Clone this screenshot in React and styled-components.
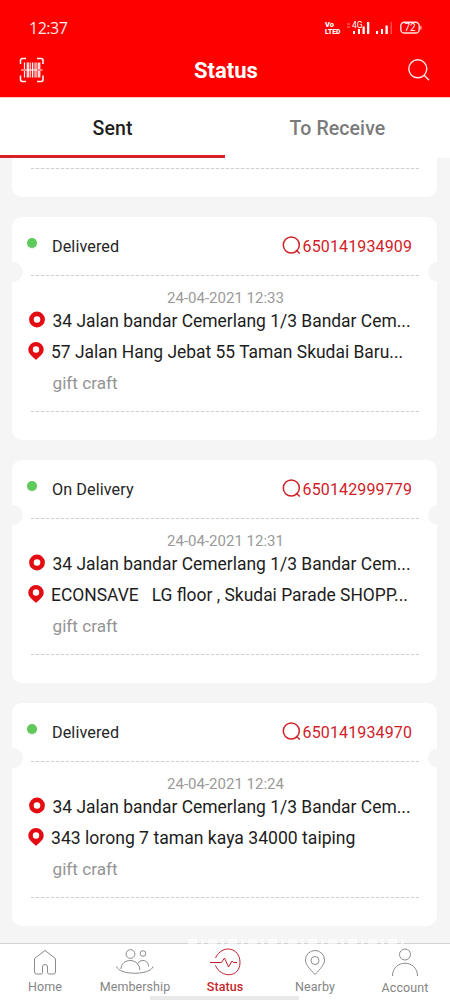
import styled, { createGlobalStyle } from "styled-components";

const GlobalStyle = createGlobalStyle`
  * {
    box-sizing: border-box;
  }
  body {
    margin: 0;
    font-family: Roboto, "Liberation Sans", sans-serif;
    background: #f5f5f5;
  }
`;
const Screen = styled.div`
  width: 450px;
  height: 1000px;
  display: flex;
  flex-direction: column;
  overflow: hidden;
  background: #f5f5f5;
`;
const Header = styled.header`
  height: 98px;
  flex: none;
  background: #fe0000;
  border-bottom: 1px solid #ffc9c9;
  color: #fff;
`;
const StatusBar = styled.div`
  height: 46px;
  padding: 9px 28px 0 29px;
  display: flex;
  align-items: center;
  justify-content: space-between;
`;
const Clock = styled.span`
  font: 400 16px "Open Sans", sans-serif;
  letter-spacing: -0.5px;
  color: #ffe9e9;
`;
const TitleBar = styled.div`
  height: 50px;
  padding: 0 19px 2px 19px;
  display: grid;
  grid-template-columns: 26px 1fr 24px;
  align-items: center;
`;
const Title = styled.h1`
  margin: 0;
  padding-top: 2px;
  text-align: center;
  font-size: 22px;
  line-height: 26px;
  font-weight: 700;
`;
const Tabs = styled.nav`
  height: 60px;
  flex: none;
  display: grid;
  grid-template-columns: 1fr 1fr;
  background: #fff;
`;
const Tab = styled.div`
  display: flex;
  align-items: center;
  justify-content: center;
  padding-top: 3px;
  font-size: 19.5px;
  font-weight: 500;
  letter-spacing: 0.1px;
  color: ${({ $active }) => ($active ? "#1f1f1f" : "#7b7b7b")};
  border-bottom: 3px solid ${({ $active }) => ($active ? "#d9202a" : "#fff")};
`;
const List = styled.main`
  height: 785px;
  flex: none;
  display: flex;
  flex-direction: column;
  gap: 20px;
  padding: 0 13px 0 12px;
  overflow: hidden;
`;
const CardEnd = styled.div`
  height: 39px;
  flex: none;
  padding: 10px 18px 0 19px;
  background: #fff;
  border-radius: 0 0 10px 10px;
`;
const Card = styled.article`
  position: relative;
  height: 223px;
  flex: none;
  padding: 0 18px 0 19px;
  background: #fff;
  border-radius: 10px;
`;
const Notch = styled.i`
  position: absolute;
  top: 45px;
  ${({ $side }) => ($side === "left" ? "left: -9px;" : "right: -11px;")}
  width: 20px;
  height: 20px;
  border-radius: 50%;
  background: #f5f5f5;
`;
const Dashes = styled.div`
  height: 1px;
  background: repeating-linear-gradient(90deg, #cfcfcf 0 3px, #f7f7f7 3px 5px);
`;
const CardHead = styled.div`
  height: 58px;
  padding: 1px 7px 0 0;
  margin-left: -4px;
  display: flex;
  align-items: center;
`;
const Dot = styled.span`
  width: 10px;
  height: 10px;
  margin: -7px 15px 0 0;
  border-radius: 50%;
  background: #5fc85a;
  box-shadow: 0 1px 2px #dff3de;
`;
const State = styled.span`
  flex: 1;
  font-size: 16.2px;
  letter-spacing: 0.08px;
  color: #262626;
`;
const Tracking = styled.span`
  display: flex;
  align-items: center;
  font-size: 16px;
  letter-spacing: 0.13px;
  color: #cf2228;
  svg {
    margin: -2px 1px 0 0;
  }
`;
const Stamp = styled.div`
  height: 29px;
  padding: 13px 0 0 1px;
  text-align: center;
  font-size: 15px;
  line-height: 19px;
  color: #9a9a9a;
`;
const Address = styled.div`
  height: 31px;
  display: flex;
  align-items: center;
  margin-left: -3px;
  font-size: ${({ $size }) => $size || 17.45}px;
  white-space: pre;
  color: #1d1d1d;
  svg {
    flex: none;
    margin: -1px ${({ $to }) => ($to ? "7px" : "7.5px")} 0 0;
  }
`;
const Note = styled.div`
  height: 44px;
  padding: 6px 0 0 21.500px;
  font-size: 17.2px;
  line-height: 21px;
  color: #949494;
`;
const BottomNav = styled.nav`
  position: relative;
  height: 57px;
  flex: none;
  display: grid;
  grid-template-columns: repeat(5, 90px);
  background: #fff;
  border-top: 1px solid #d2d2d2;
`;
const NavItem = styled.div`
  display: flex;
  flex-direction: column;
  align-items: center;
  padding-top: ${({ $drop }) => $drop || 0}px;
  font-size: 12.5px;
  line-height: 15px;
  letter-spacing: 0.08px;
  font-weight: ${({ $active }) => ($active ? 500 : 400)};
  color: ${({ $active }) => ($active ? "#c51f2b" : "#858585")};
  svg {
    flex: none;
    margin-bottom: -1px;
  }
`;
const HomeHandle = styled.i`
  position: absolute;
  left: 150px;
  bottom: 0;
  width: 149px;
  height: 4px;
  background: #e9e9e9;
`;
const Sheen = styled.i`
  position: absolute;
  left: 188px;
  top: -5px;
  width: 216px;
  height: 5px;
  opacity: 0.6;
  background: repeating-linear-gradient(90deg, #fff 0 9px, transparent 9px 13px, #fff 13px 16px, transparent 16px 20px);
`;

function ScanIcon() {
  return (
    <svg width="26" height="26" viewBox="0 0 26 26" fill="none" stroke="#fff">
      <path
        d="M1.500 7V3.500a2 2 0 0 1 2-2H7M18 1.500h4a2 2 0 0 1 2 2V7M24 18.500v4a2 2 0 0 1-2 2h-4M7 24.500H3.500a2 2 0 0 1-2-2v-4"
        strokeWidth="1.500"
      />
      <path d="M2 13h21.500" strokeWidth="1" />
      <path d="M5.500 5.500V12M5.500 14v6.500M13.500 5.500v15M17 5.500v15" strokeWidth="1.200" />
      <path d="M9 5.500v15M20 5.500V12M20 14v6.500" strokeWidth="2.800" opacity=".85" />
      <path d="M11.500 5.500v15M15.200 5.500v15" strokeWidth=".7" />
    </svg>
  );
}

function SearchIcon() {
  return (
    <svg width="24" height="24" viewBox="0 0 24 24" fill="none" stroke="#ffe8e8" strokeWidth="1.400">
      <circle cx="10.800" cy="10.800" r="9" />
      <path d="m17.200 17.200 4.800 5" />
    </svg>
  );
}

function TrackIcon() {
  return (
    <svg width="20" height="19" viewBox="0 0 20 19" fill="none" stroke="#cf2228" strokeWidth="1.500">
      <circle cx="9.300" cy="9" r="8" />
      <path d="m14 14 3.800 3.500" />
    </svg>
  );
}

function SignalIcons() {
  return (
    <svg width="98" height="18" viewBox="0 0 98 18" fill="#fff">
      <g fontFamily="Roboto, sans-serif" fontWeight="900">
        <text x="1" y="7.800" fontSize="7.500">Vo</text>
        <text x="1" y="15" fontSize="7.500" textLength="15.500" lengthAdjust="spacingAndGlyphs">LTED</text>
        <text x="28" y="8.500" fontSize="8.500" fontWeight="400">4G</text>
      </g>
      <path d="M23 4.500h3v1h-3zM23 7.500h3v1h-3z" opacity=".5" />
      <path d="M29 12h2v3h-2zM34 10h2v5h-2zM38.500 7.500h2.300V15h-2.300zM43 3h2.300v12H43zM52 12h2v3h-2zM57 10h2v5h-2zM61.500 6.500h2.300V15h-2.300z" />
      <path d="M66.500 3h1.500v12h-1.500z" opacity=".3" />
      <rect x="76.800" y="3.200" width="18.400" height="10.800" rx="3.600" fill="none" stroke="#ffe5e5" strokeWidth="1.400" />
      <path d="M96.300 7h1.200v3.500h-1.200z" opacity=".8" />
      <text x="80.500" y="12.200" fontSize="10" fontFamily="Roboto, sans-serif">72</text>
    </svg>
  );
}

function FromIcon() {
  return (
    <svg width="17" height="18" viewBox="0 0 17 18">
      <circle cx="9" cy="8.500" r="5.600" fill="none" stroke="#e30c12" strokeWidth="4.600" />
    </svg>
  );
}

function ToIcon() {
  return (
    <svg width="16" height="19" viewBox="0 0 16 19">
      <path
        fill="#e30c12"
        fillRule="evenodd"
        d="M8 0a7.700 7.700 0 0 1 7.700 7.700c0 4.300-4.700 7-7.700 10.300C5 14.700.3 12 .3 7.700A7.700 7.700 0 0 1 8 0Zm0 4.300a3.200 3.200 0 1 0 0 6.400 3.200 3.200 0 0 0 0-6.400Z"
      />
    </svg>
  );
}

const navIcons = {
  Home: (
    <path d="M17.500 23.500V18q0-2.500 2.500-2.500t2.500 2.500v5.500q0 1.500 1.500 1.500h4.500q2 0 2-2V9.500L20 1.500 9.500 9.500V23q0 2 2 2H16q1.500 0 1.500-1.500Z" />
  ),
  Membership: (
    <>
      <circle cx="15.500" cy="5" r="4.400" />
      <circle cx="28" cy="4.500" r="2.800" />
      <path d="M6 20c0-11 18-12 19 1M23 14.500c3-5.500 11-3 10.500 3M1.500 17.500c3 9 34 9 36.500 0" />
    </>
  ),
  Status: (
    <>
      <path d="M10.500 10C17-4 35-1 35 14.500c0 15.500-19 16-24.500 3" />
      <path d="M5 14.500h11.500l3-4.500 4 9 3.500-6 1.500 1.500h3.500" />
    </>
  ),
  Nearby: (
    <>
      <path d="M20 25.500C15 20 10.500 16 10.500 11a9.500 9.500 0 0 1 19 0c0 5-4.500 9-9.500 14.500Z" />
      <circle cx="20" cy="11.500" r="4" />
    </>
  ),
  Account: (
    <>
      <circle cx="20" cy="6.500" r="5.500" />
      <path d="M7.500 28c0-17 25-17 25 0" />
    </>
  ),
};

const parcels = [
  {
    id: "650141934909",
    state: "Delivered",
    time: "24-04-2021 12:33",
    to: "57 Jalan Hang Jebat 55 Taman Skudai Baru...",
  },
  {
    id: "650142999779",
    state: "On Delivery",
    time: "24-04-2021 12:31",
    to: "ECONSAVE   LG floor , Skudai Parade SHOPP...",
  },
  {
    id: "650141934970",
    state: "Delivered",
    time: "24-04-2021 12:24",
    to: "343 lorong 7 taman kaya 34000 taiping",
    size: 17.6,
  },
];

const navItems = [
  { name: "Home", top: -5 },
  { name: "Membership", top: -5 },
  { name: "Status", top: -4, active: true },
  { name: "Nearby", top: -5 },
  { name: "Account", drop: 1, top: -3 },
];

function ParcelCard({ parcel }) {
  return (
    <Card>
      <Notch $side="left" />
      <Notch $side="right" />
      <CardHead>
        <Dot />
        <State>{parcel.state}</State>
        <Tracking>
          <TrackIcon />
          {parcel.id}
        </Tracking>
      </CardHead>
      <Dashes />
      <Stamp>{parcel.time}</Stamp>
      <Address>
        <FromIcon />
        <span>34 Jalan bandar Cemerlang 1/3 Bandar Cem...</span>
      </Address>
      <Address $to $size={parcel.size}>
        <ToIcon />
        <span>{parcel.to}</span>
      </Address>
      <Note>gift craft</Note>
      <Dashes />
    </Card>
  );
}

export default function App() {
  return (
    <Screen>
      <GlobalStyle />
      <Header>
        <StatusBar>
          <Clock>12:37</Clock>
          <SignalIcons />
        </StatusBar>
        <TitleBar>
          <ScanIcon />
          <Title>Status</Title>
          <SearchIcon />
        </TitleBar>
      </Header>
      <Tabs>
        <Tab $active>Sent</Tab>
        <Tab>To Receive</Tab>
      </Tabs>
      <List>
        <CardEnd>
          <Dashes />
        </CardEnd>
        {parcels.map((parcel) => (
          <ParcelCard key={parcel.id} parcel={parcel} />
        ))}
      </List>
      <BottomNav>
        {navItems.map(({ name, drop, top, active }) => (
          <NavItem key={name} $active={active} $drop={drop}>
            <svg
              width="40"
              height="36"
              viewBox={`0 ${top} 40 36`}
              fill="none"
              stroke={active ? "#c51f2b" : "#8b8b8b"}
              strokeWidth="1"
            >
              {navIcons[name]}
            </svg>
            {name}
          </NavItem>
        ))}
        <Sheen />
        <HomeHandle />
      </BottomNav>
    </Screen>
  );
}
